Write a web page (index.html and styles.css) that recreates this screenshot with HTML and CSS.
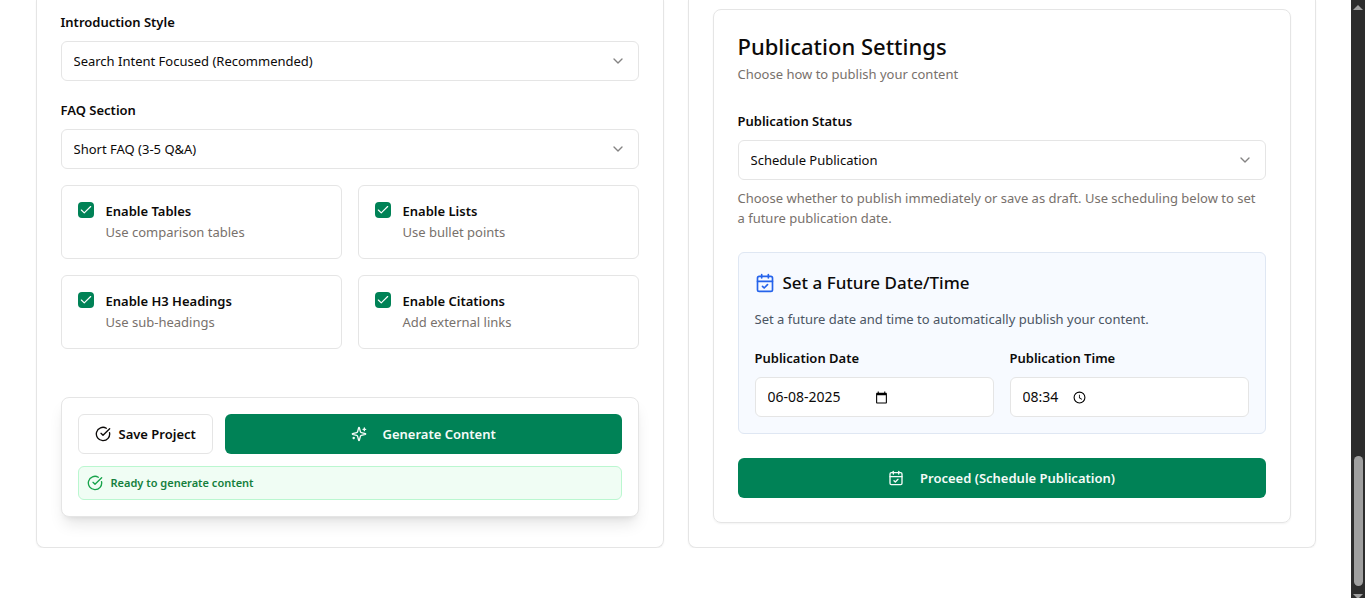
FILE: index.html
```html
<!DOCTYPE html>
<html lang="en">
<head>
<meta charset="utf-8">
<meta name="viewport" content="width=device-width, initial-scale=1">
<title>Publication Settings</title>
<link rel="stylesheet" href="styles.css">
</head>
<body>
<svg class="sprite" aria-hidden="true">
  <symbol id="chevron" viewBox="0 0 24 24"><path d="m6 9 6 6 6-6"/></symbol>
  <symbol id="check" viewBox="0 0 24 24"><path d="M20 6 9 17l-5-5"/></symbol>
  <symbol id="circle-check" viewBox="0 0 24 24"><path d="M21.801 10A10 10 0 1 1 17 3.335"/><path d="m9 11 3 3L22 4"/></symbol>
  <symbol id="sparkles" viewBox="0 0 24 24"><path d="M9.937 15.5A2 2 0 0 0 8.5 14.063l-6.135-1.582a.5.5 0 0 1 0-.962L8.5 9.936A2 2 0 0 0 9.937 8.5l1.582-6.135a.5.5 0 0 1 .963 0L14.063 8.5A2 2 0 0 0 15.5 9.937l6.135 1.581a.5.5 0 0 1 0 .964L15.5 14.063a2 2 0 0 0-1.437 1.437l-1.582 6.135a.5.5 0 0 1-.963 0z"/><path d="M20 3v4"/><path d="M22 5h-4"/><path d="M4 17v2"/><path d="M5 18H3"/></symbol>
  <symbol id="calendar-check" viewBox="0 0 24 24"><path d="M8 2v4"/><path d="M16 2v4"/><rect width="18" height="18" x="3" y="4" rx="2"/><path d="M3 10h18"/><path d="m9 16 2 2 4-4"/></symbol>
</svg>
<main class="page">
  <section class="panel panel-options">
    <div class="field">
      <label for="intro">Introduction Style</label>
      <div class="select-wrap">
        <select id="intro"><option>Search Intent Focused (Recommended)</option></select>
        <svg class="icon chevron"><use href="#chevron"/></svg>
      </div>
    </div>
    <div class="field">
      <label for="faq">FAQ Section</label>
      <div class="select-wrap">
        <select id="faq"><option>Short FAQ (3-5 Q&amp;A)</option></select>
        <svg class="icon chevron"><use href="#chevron"/></svg>
      </div>
    </div>
    <div class="toggles">
      <div class="toggle">
        <span class="box"><input type="checkbox" id="tables" checked><svg class="icon tick"><use href="#check"/></svg></span>
        <div><label for="tables">Enable Tables</label><p class="muted">Use comparison tables</p></div>
      </div>
      <div class="toggle">
        <span class="box"><input type="checkbox" id="lists" checked><svg class="icon tick"><use href="#check"/></svg></span>
        <div><label for="lists">Enable Lists</label><p class="muted">Use bullet points</p></div>
      </div>
      <div class="toggle">
        <span class="box"><input type="checkbox" id="headings" checked><svg class="icon tick"><use href="#check"/></svg></span>
        <div><label for="headings">Enable H3 Headings</label><p class="muted">Use sub-headings</p></div>
      </div>
      <div class="toggle">
        <span class="box"><input type="checkbox" id="citations" checked><svg class="icon tick"><use href="#check"/></svg></span>
        <div><label for="citations">Enable Citations</label><p class="muted">Add external links</p></div>
      </div>
    </div>
    <div class="actions">
      <div class="buttons">
        <button class="btn btn-outline" type="button"><svg class="icon"><use href="#circle-check"/></svg>Save Project</button>
        <button class="btn btn-primary" type="button"><svg class="icon"><use href="#sparkles"/></svg>Generate Content</button>
      </div>
      <div class="status" role="status"><svg class="icon"><use href="#circle-check"/></svg>Ready to generate content</div>
    </div>
  </section>

  <section class="panel panel-publish">
    <div class="card">
      <header class="card-head">
        <h2>Publication Settings</h2>
        <p class="muted">Choose how to publish your content</p>
      </header>
      <div class="field">
        <label for="status">Publication Status</label>
        <div class="select-wrap">
          <select id="status"><option>Schedule Publication</option></select>
          <svg class="icon chevron"><use href="#chevron"/></svg>
        </div>
        <p class="muted">Choose whether to publish immediately or save as draft. Use scheduling below to set a&nbsp;future publication date.</p>
      </div>
      <div class="schedule">
        <h3><svg class="icon"><use href="#calendar-check"/></svg>Set a Future Date/Time</h3>
        <p class="schedule-note">Set a future date and time to automatically publish your content.</p>
        <div class="schedule-grid">
          <div class="field">
            <label for="date">Publication Date</label>
            <div class="picker">
              <input class="date" id="date" type="text" value="06-08-2025">
              <button type="button" aria-label="Show date picker"><svg viewBox="0 0 24 24"><path d="M20 3h-1V1h-2v2H7V1H5v2H4c-1.100 0-2 .9-2 2v16c0 1.100.9 2 2 2h16c1.100 0 2-.9 2-2V5c0-1.100-.9-2-2-2zm0 18H4V8h16v13z"/></svg></button>
            </div>
          </div>
          <div class="field">
            <label for="time">Publication Time</label>
            <div class="picker">
              <input class="time" id="time" type="text" value="08:34">
              <button type="button" aria-label="Show time picker"><svg viewBox="0 0 24 24"><path d="M12 1a11 11 0 1 0 0 22 11 11 0 0 0 0-22zm0 20a9 9 0 1 1 0-18 9 9 0 0 1 0 18z"/><path d="M12.500 7H11v6l5 3 .8-1.200-4.300-2.600z"/></svg></button>
            </div>
          </div>
        </div>
      </div>
      <button class="btn btn-primary" type="button"><svg class="icon"><use href="#calendar-check"/></svg>Proceed (Schedule Publication)</button>
    </div>
  </section>
</main>
<div class="scrollbar" aria-hidden="true"><i class="arrow up"></i><i class="thumb"></i><i class="arrow down"></i></div>
</body>
</html>
```
FILE: styles.css
```css
* { box-sizing: border-box; }

body {
  margin: 0;
  padding-right: 14px;
  overflow: hidden;
  background: #fff;
  color: #0c0a09;
  font: 13px/20px "Segoe UI", "Noto Sans", "Open Sans", sans-serif;
}

h2, h3, p { margin: 0; }
button, input, select { font: inherit; color: inherit; }
label { font-weight: 600; }
.muted { color: #78716c; }
.sprite { display: none; }

.icon {
  width: 16px;
  height: 16px;
  flex: none;
  fill: none;
  stroke: currentColor;
  stroke-width: 2;
  stroke-linecap: round;
  stroke-linejoin: round;
}

.page {
  display: grid;
  grid-template-columns: 1fr 1fr;
  gap: 24px;
  max-width: 1280px;
  margin: 0 auto;
}

.panel {
  display: flex;
  flex-direction: column;
  gap: 16px;
  padding: 9px 24px 24px;
  border: 1px solid #e5e5e5;
  border-top: 0;
  border-radius: 0 0 8px 8px;
  box-shadow: 0 1px 2px rgba(0, 0, 0, .05);
}

.field { display: flex; flex-direction: column; gap: 8px; }
.field > label { padding-top: 2px; line-height: 22px; }

.select-wrap { position: relative; }
select {
  display: block;
  width: 100%;
  height: 40px;
  padding: 0 12px;
  border: 1px solid #e5e5e5;
  border-radius: 6px;
  background: #fff;
  appearance: none;
}
.chevron {
  position: absolute;
  top: 12px;
  right: 13px;
  opacity: .5;
  pointer-events: none;
}

.toggles { display: grid; grid-template-columns: 1fr 1fr; gap: 16px; }
.toggle {
  display: flex;
  gap: 12px;
  padding: 16px;
  border: 1px solid #e5e5e5;
  border-radius: 6px;
}
.toggle label { display: block; padding-bottom: 2px; line-height: 18px; }
.box { display: grid; width: 16px; height: 16px; }
.box > * { grid-area: 1 / 1; place-self: center; }
.box input {
  width: 16px;
  height: 16px;
  margin: 0;
  border-radius: 4px;
  background: #008256;
  appearance: none;
}
.tick { width: 14px; height: 14px; color: #fff; pointer-events: none; }

.actions {
  display: flex;
  flex-direction: column;
  gap: 12px;
  margin-top: 32px;
  padding: 16px;
  border: 1px solid #e5e5e5;
  border-radius: 8px;
  background: #fff;
  box-shadow: 0 10px 15px -3px rgba(0, 0, 0, .1), 0 4px 6px -4px rgba(0, 0, 0, .1);
}
.buttons { display: flex; gap: 12px; }
.btn {
  display: flex;
  align-items: center;
  justify-content: center;
  height: 40px;
  padding: 0 16px;
  border: 0;
  border-radius: 6px;
  font-weight: 600;
}
.btn-outline { gap: 8px; border: 1px solid #e5e5e5; background: #fff; }
.btn-primary { flex: 1 0 auto; gap: 16px; background: #008256; color: #f5fbf8; }
.status {
  display: flex;
  align-items: center;
  gap: 8px;
  padding: 8px;
  border: 1px solid #bbf7d0;
  border-radius: 6px;
  background: #f0fdf4;
  color: #15803d;
  font-size: 11px;
  line-height: 16px;
  font-weight: 600;
}
.status .icon { color: #16a34a; }

.card {
  display: flex;
  flex-direction: column;
  gap: 24px;
  padding: 24px;
  border: 1px solid #e5e5e5;
  border-radius: 8px;
  box-shadow: 0 1px 2px rgba(0, 0, 0, .05);
}
.card-head { display: flex; flex-direction: column; gap: 6px; }
h2 { font-size: 22px; line-height: 24px; font-weight: 500; }

.schedule {
  padding: 16px;
  border: 1px solid #dfe7f3;
  border-radius: 6px;
  background: #f7faff;
}
h3 {
  display: flex;
  align-items: center;
  gap: 8px;
  font-size: 17px;
  line-height: 28px;
  font-weight: 500;
}
h3 .icon { width: 20px; height: 20px; color: #2563eb; }
.schedule-note { margin: 12px 0 16px; color: #4b5563; }
.schedule-grid { display: grid; grid-template-columns: 1fr 1fr; gap: 16px; }

.picker {
  display: flex;
  align-items: center;
  gap: 12px;
  height: 40px;
  padding: 0 12px;
  border: 1px solid #e5e5e5;
  border-radius: 6px;
  background: #fff;
}
.picker input { padding: 0; border: 0; background: none; font-size: 14px; }
.date { width: 95px; }
.time { width: 38px; }
.picker button { display: flex; padding: 0; border: 0; background: none; }
.picker svg { width: 13px; height: 13px; }

.scrollbar {
  position: fixed;
  top: 0;
  right: 0;
  bottom: 0;
  display: flex;
  flex-direction: column;
  align-items: center;
  width: 14px;
  padding-top: 5px;
  background: #2c2c2c;
}
.arrow { border: 5px solid transparent; }
.up { border-top: 0; border-bottom-color: #9f9f9f; }
.down { border-bottom: 0; border-top-color: #9f9f9f; margin-top: 8px; margin-bottom: -1px; }
.thumb { width: 9px; height: 22%; margin-top: auto; border-radius: 5px; background: #9f9f9f; }
```
